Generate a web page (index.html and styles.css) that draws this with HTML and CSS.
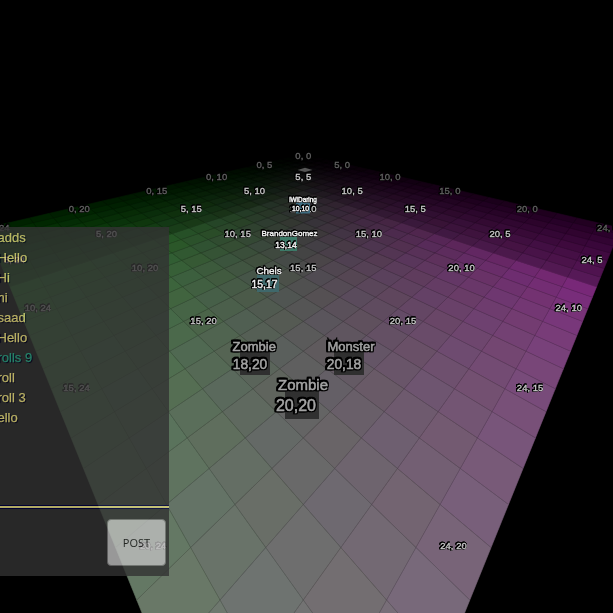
FILE: index.html
```
<!DOCTYPE html>
<html lang="en">
<head>
<meta charset="utf-8">
<title>Grid world</title>
<link rel="stylesheet" href="styles.css">
</head>
<body>
<main class="world">
<svg class="board" viewBox="0 0 613 613" width="613" height="613"></svg>
<section class="chat">
<ul class="log">
<li>adds</li>
<li>Hello</li>
<li>Hi</li>
<li>hi</li>
<li>saad</li>
<li>Hello</li>
<li class="roll">rolls 9</li>
<li>roll</li>
<li>roll 3</li>
<li>ello</li>
</ul>
<div class="composer"><button class="post" type="button">POST</button></div>
</section>
</main>
<script src="board.js"></script>
</body>
</html>
```
FILE: styles.css
```
html, body { margin: 0; background: #000; }
.world { position: relative; width: 613px; height: 613px; overflow: hidden; background: #000; font-family: "Liberation Sans", Arial, sans-serif; }
.board { display: block; }
.tile { stroke-width: .6; }
.rule { stroke: #000; stroke-opacity: .14; stroke-width: 1; }
.coord, .name { text-anchor: middle; filter: drop-shadow(.6px 0 #000) drop-shadow(-.6px 0 #000) drop-shadow(0 .6px #000) drop-shadow(0 -.6px #000); }
.coord { font-size: 9.5px; fill: #c8c8c8; stroke: #c8c8c8; stroke-width: .35px; }
.coord.edge { fill: #606060; stroke: #606060; }
.name { fill: #f2f2f2; stroke: #f2f2f2; stroke-width: .4px; }
.name.foe { fill: #a4a4a4; stroke: #a4a4a4; stroke-width: .5px; filter: drop-shadow(1.1px 0 #000) drop-shadow(-1.1px 0 #000) drop-shadow(0 1.1px #000) drop-shadow(0 -1.1px #000); }
.spike { fill: none; stroke: #000; stroke-width: 1.3; }
.chat { position: absolute; left: -200px; top: 227px; width: 369px; height: 349px; display: flex; flex-direction: column; background: #333; opacity: .8; }
.log { list-style: none; margin: 0; padding: 1px 0 0; height: 279px; box-sizing: border-box; color: #e6db7c; font-size: 13px; line-height: 20px; text-shadow: 1px 1px 1px #000020; -webkit-text-stroke: .25px; }
.log li { height: 20px; margin-left: 197.5px; white-space: nowrap; }
.log .roll { color: #2fa283; }
.composer { flex: 1; display: flex; justify-content: flex-end; align-items: center; padding: 0 3px 0 0; border-top: 2px solid #ddd47c; box-shadow: 0 -1px #000040, inset 0 1px #000040; }
.post { width: 59px; height: 47px; padding: 0; border: 1px solid #777; border-radius: 4px; background: #bebebe; color: #111; font: 11px "Open Sans", sans-serif; }
```
FILE: board.js
```
const NS = 'http://www.w3.org/2000/svg';
const board = document.querySelector('.board');
const project = (a, b) => {
  const w = 54.2 - a - b;
  return [303.3 + 383 * (a - b) / w, 65.1 + 4921 / w];
};
function add(tag, attrs, text) {
  const el = document.createElementNS(NS, tag);
  for (const key in attrs) el.setAttribute(key, attrs[key]);
  if (text) el.textContent = text;
  board.appendChild(el);
}
function shade(a, b) {
  const low = Math.min(a, b);
  const light = low >= 8 ? Math.min(1, 0.86 + (a + b - 16) * 0.01) : 0.3 + 0.06 * low;
  const r = 5 * a * light;
  const g = 5 * b * light;
  const tint = (a + b) % 2 ? (b % 2 ? 2 : -2) : 0;
  return `rgb(${r | 0},${g | 0},${Math.max(0, r + tint * light) | 0})`;
}
for (let a = 0; a < 25; a++) {
  for (let b = 0; b < 25; b++) {
    const corners = [[-.5, -.5], [.5, -.5], [.5, .5], [-.5, .5]];
    const points = corners.map(([x, y]) => project(a + x, b + y).join()).join(' ');
    const fill = shade(a, b);
    add('polygon', { class: 'tile', points, fill, stroke: fill });
  }
}
function rule([x1, y1], [x2, y2]) {
  add('line', { class: 'rule', x1, y1, x2, y2 });
}
for (let i = 0.5; i < 24; i++) {
  rule(project(i, -.5), project(i, 24.5));
  rule(project(-.5, i), project(24.5, i));
}
const marks = [0, 5, 10, 15, 20, 24];
for (const a of marks) {
  for (const b of marks) {
    if (a + b >= 40 && a === b) continue;
    const [x, y] = project(a, b);
    const lift = 0.4 + Math.max(0, a + b - 28) * 0.08;
    add('text', { class: 'coord' + (a * b === 0 ? ' edge' : ''), x, y: y + 3.6 - lift }, `${a}, ${b}`);
  }
}
add('polygon', { points: '297.5,170 305,167.8 312.5,170 305,172', fill: '#555' });
const tokens = [
  ['iWiDaring', 303, 202, 6.4, '10,10', 300.5, 211, 6.8, 296, 202, 14, 11.5, '#3d6c80'],
  ['BrandonGomez', 289.5, 236.3, 8, '13,14', 286, 247.5, 8.5, 280, 237, 17, 14, '#3c7a68'],
  ['Chels', 269, 274.3, 9.9, '15,17', 264.5, 288.3, 10.4, 257, 275, 22, 17, '#3f686b'],
  ['Zombie', 254.3, 351, 13, '18,20', 250, 369, 13.8, 240, 348, 30, 27, '#303030'],
  ['Monster', 351, 351, 13, '20,18', 344, 369, 13.8, 334, 348, 30, 27, '#303030'],
  ['Zombie', 303, 390, 15, '20,20', 296, 411, 16, 285, 386, 34, 33, '#303030']
];
for (const [name, nx, ny, ns, at, ax, ay, as, x, y, width, height, fill] of tokens) {
  const kind = 'name' + (fill === '#303030' ? ' foe' : '');
  add('rect', { x, y, width, height, fill });
  if (name === 'Monster') add('path', { class: 'spike', d: 'M327.5 337.5l3 7M337 337.5l-3 7' });
  add('text', { class: kind, x: nx, y: ny, 'font-size': ns }, name);
  add('text', { class: kind, x: ax, y: ay, 'font-size': as }, at);
}
```
